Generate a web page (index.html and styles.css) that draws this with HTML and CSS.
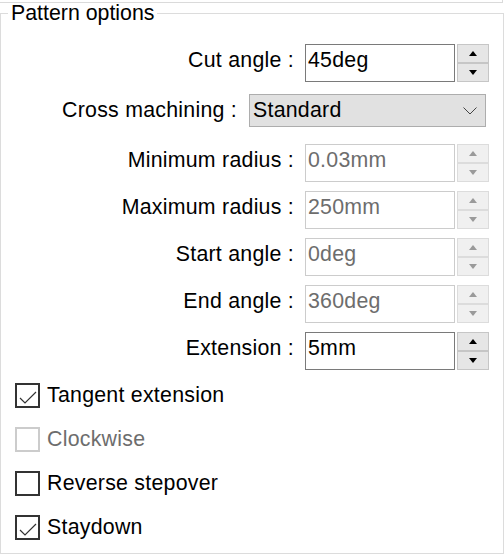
FILE: index.html
```html
<!DOCTYPE html>
<html>
<head>
<meta charset="utf-8">
<link rel="stylesheet" href="styles.css">
</head>
<body>
<div class="topbar"></div>
<fieldset class="group">
  <legend class="group-title">Pattern options</legend>
  <div class="content">
    <div class="row spin-row">
      <span class="label">Cut angle :</span>
      <div class="field">45deg</div>
      <div class="spinner">
        <div class="spin-btn"><svg width="8" height="5" viewBox="0 0 8 5"><polygon points="0,5 8,5 4,0"/></svg></div>
        <div class="spin-btn"><svg width="8" height="5" viewBox="0 0 8 5"><polygon points="0,0 8,0 4,5"/></svg></div>
      </div>
    </div>
    <div class="row combo-row">
      <span class="label">Cross machining :</span>
      <div class="combo">
        <span class="combo-text">Standard</span>
        <svg class="chevron" width="14" height="8" viewBox="0 0 14 8"><polyline points="0.5,0.5 7,7 13.5,0.5" fill="none" stroke="#444" stroke-width="1"/></svg>
      </div>
    </div>
    <div class="row spin-row disabled">
      <span class="label">Minimum radius :</span>
      <div class="field">0.03mm</div>
      <div class="spinner">
        <div class="spin-btn"><svg width="8" height="5" viewBox="0 0 8 5"><polygon points="0,5 8,5 4,0"/></svg></div>
        <div class="spin-btn"><svg width="8" height="5" viewBox="0 0 8 5"><polygon points="0,0 8,0 4,5"/></svg></div>
      </div>
    </div>
    <div class="row spin-row disabled">
      <span class="label">Maximum radius :</span>
      <div class="field">250mm</div>
      <div class="spinner">
        <div class="spin-btn"><svg width="8" height="5" viewBox="0 0 8 5"><polygon points="0,5 8,5 4,0"/></svg></div>
        <div class="spin-btn"><svg width="8" height="5" viewBox="0 0 8 5"><polygon points="0,0 8,0 4,5"/></svg></div>
      </div>
    </div>
    <div class="row spin-row disabled">
      <span class="label">Start angle :</span>
      <div class="field">0deg</div>
      <div class="spinner">
        <div class="spin-btn"><svg width="8" height="5" viewBox="0 0 8 5"><polygon points="0,5 8,5 4,0"/></svg></div>
        <div class="spin-btn"><svg width="8" height="5" viewBox="0 0 8 5"><polygon points="0,0 8,0 4,5"/></svg></div>
      </div>
    </div>
    <div class="row spin-row disabled">
      <span class="label">End angle :</span>
      <div class="field">360deg</div>
      <div class="spinner">
        <div class="spin-btn"><svg width="8" height="5" viewBox="0 0 8 5"><polygon points="0,5 8,5 4,0"/></svg></div>
        <div class="spin-btn"><svg width="8" height="5" viewBox="0 0 8 5"><polygon points="0,0 8,0 4,5"/></svg></div>
      </div>
    </div>
    <div class="row spin-row">
      <span class="label">Extension :</span>
      <div class="field">5mm</div>
      <div class="spinner">
        <div class="spin-btn"><svg width="8" height="5" viewBox="0 0 8 5"><polygon points="0,5 8,5 4,0"/></svg></div>
        <div class="spin-btn"><svg width="8" height="5" viewBox="0 0 8 5"><polygon points="0,0 8,0 4,5"/></svg></div>
      </div>
    </div>

    <div class="checks">
      <div class="check">
        <span class="box"><svg width="21" height="21" viewBox="0 0 21 21"><polyline points="3,13 8,18 19,7" fill="none" stroke="#333" stroke-width="1.2"/></svg></span>
        <span class="check-label">Tangent extension</span>
      </div>
      <div class="check disabled">
        <span class="box"></span>
        <span class="check-label">Clockwise</span>
      </div>
      <div class="check">
        <span class="box"></span>
        <span class="check-label">Reverse stepover</span>
      </div>
      <div class="check">
        <span class="box"><svg width="21" height="21" viewBox="0 0 21 21"><polyline points="3,13 8,18 19,7" fill="none" stroke="#333" stroke-width="1.2"/></svg></span>
        <span class="check-label">Staydown</span>
      </div>
    </div>
  </div>
</fieldset>
</body>
</html>
```

FILE: styles.css
```css
html, body {
  margin: 0;
  padding: 0;
  background: #ffffff;
}

body {
  font-family: "Liberation Sans", Arial, sans-serif;
  font-size: 21.33px;
  letter-spacing: 0.25px;
  color: #000000;
  width: 504px;
  height: 556px;
  overflow: hidden;
}

.topbar {
  width: 502px;
  height: 2px;
  border-right: 1px solid #dadada;
  border-bottom: 1px solid #dadada;
}

.group {
  box-sizing: border-box;
  width: 504px;
  height: 551px;
  margin: 0;
  padding: 0 14px 0 14px;
  border: 1px solid #dcdcdc;
  min-width: 0;
}

.group-title {
  margin-left: -7px;
  padding: 0 3px;
  line-height: 20px;
  font-size: 21.33px;
  letter-spacing: 0;
}

.content {
  padding-top: 21px;
  display: flex;
  flex-direction: column;
}

.row {
  display: flex;
  justify-content: flex-end;
  align-items: baseline;
}

.label {
  line-height: 24px;
  white-space: pre;
}

.spin-row .label {
  margin-right: 11px;
}

.spin-row + .spin-row {
  margin-top: 9px;
}

.field {
  box-sizing: border-box;
  width: 150px;
  height: 38px;
  border: 1px solid #7a7a7a;
  background: #ffffff;
  padding: 3px 2px 0 2px;
  line-height: 24px;
}

.spinner {
  align-self: flex-start;
  margin-left: 2px;
  width: 32px;
  height: 38px;
  display: flex;
  flex-direction: column;
}

.spin-btn {
  box-sizing: border-box;
  flex: 1;
  border: 1px solid #c6c6c6;
  background: #e6e6e6;
  display: flex;
  align-items: center;
  justify-content: center;
}

.spin-btn svg {
  fill: #000000;
}

.disabled .field {
  border-color: #cccccc;
  color: #6d6d6d;
}

.disabled .spin-btn {
  border-color: #dcdcdc;
  background: #f0f0f0;
}

.disabled .spin-btn svg {
  fill: #9a9a9a;
}

.combo-row {
  margin-top: 12px;
  margin-bottom: 17px;
  padding-right: 3px;
}

.combo-row .label {
  margin-right: 12px;
}

.combo {
  box-sizing: border-box;
  width: 237px;
  height: 33px;
  border: 1px solid #adadad;
  background: #e1e1e1;
  display: flex;
  align-items: center;
  justify-content: space-between;
  padding: 0 8px 0 3px;
}

.combo-text {
  line-height: 31px;
}

.chevron {
  margin-top: 1px;
}

.checks {
  margin-top: 13px;
  display: flex;
  flex-direction: column;
  gap: 19px;
}

.check {
  display: flex;
  align-items: center;
  height: 25px;
}

.box {
  box-sizing: border-box;
  width: 25px;
  height: 25px;
  border: 2px solid #333333;
  background: #ffffff;
  margin-right: 7px;
  display: flex;
}

.check-label {
  line-height: 24px;
  margin-top: -1px;
}

.check.disabled .box {
  border-color: #cccccc;
}

.check.disabled .check-label {
  color: #6d6d6d;
}
```
